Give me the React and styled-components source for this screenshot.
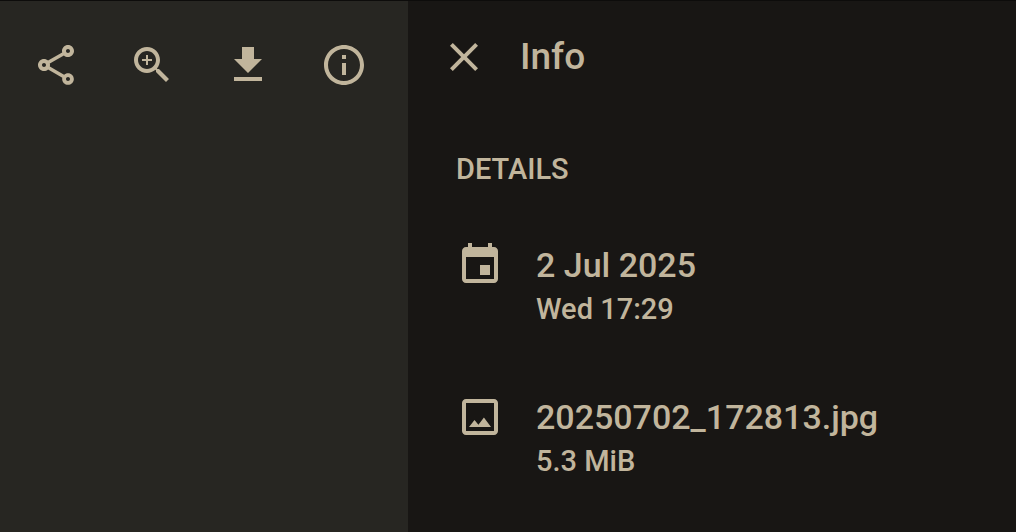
import React from "react";
import styled, { createGlobalStyle } from "styled-components";

const GlobalStyle = createGlobalStyle`
  *, *::before, *::after {
    box-sizing: border-box;
  }
  body {
    margin: 0;
    background: #181614;
    color: #c1b59c;
    font-family: Roboto, "Liberation Sans", sans-serif;
    font-weight: 500;
  }
`;

const Viewer = styled.div`
  display: flex;
  min-height: 100vh;
  border-top: 1px solid #0d0c0b;
`;

const Stage = styled.main`
  flex: 1;
  background: #272622;
`;

const Toolbar = styled.div`
  display: flex;
  justify-content: flex-end;
  padding: 16px 16px 0 8px;
`;

const IconButton = styled.button`
  display: flex;
  padding: ${(p) => (p.$compact ? "0" : "24px")};
  border: 0;
  background: none;
  color: inherit;
  cursor: pointer;
`;

const Glyph = styled.svg`
  display: block;
  flex: none;
  width: 48px;
  height: 48px;
  fill: currentColor;
`;

const Panel = styled.aside`
  flex: 0 0 608px;
  padding: 32px 32px 0;
  background: #181614;
`;

const PanelHeader = styled.header`
  display: flex;
  align-items: center;
  gap: 32px;
`;

const Title = styled.h1`
  margin: 0;
  font-size: 37px;
  line-height: 48px;
  font-weight: inherit;
`;

const SectionTitle = styled.h2`
  margin: 68px 0 0 16px;
  font-size: 29px;
  line-height: 40px;
  font-weight: inherit;
`;

const DetailList = styled.ul`
  display: grid;
  gap: 64px;
  margin: 52px 0 0 16px;
  padding: 0;
  list-style: none;
`;

const Detail = styled.li`
  display: flex;
  gap: 32px;
`;

const Primary = styled.div`
  font-size: 34px;
  line-height: 48px;
`;

const Secondary = styled.div`
  font-size: 29px;
  line-height: 40px;
`;

const icons = {
  share:
    "M18 16.08c-.76 0-1.44.3-1.96.77L8.91 12.7c.05-.23.09-.46.09-.7s-.04-.47-.09-.7l7.05-4.11c.54.5 1.25.81 2.04.81 1.66 0 3-1.34 3-3s-1.34-3-3-3-3 1.34-3 3c0 .24.04.47.09.7L8.04 9.81C7.5 9.31 6.79 9 6 9c-1.66 0-3 1.34-3 3s1.34 3 3 3c.79 0 1.5-.31 2.04-.81l7.12 4.16c-.05.21-.08.43-.08.65 0 1.61 1.31 2.92 2.92 2.92s2.92-1.31 2.92-2.92-1.31-2.92-2.92-2.92zM18 4c.55 0 1 .45 1 1s-.45 1-1 1-1-.45-1-1 .45-1 1-1zM6 13c-.55 0-1-.45-1-1s.45-1 1-1 1 .45 1 1-.45 1-1 1zm12 7.02c-.55 0-1-.45-1-1s.45-1 1-1 1 .45 1 1-.45 1-1 1z",
  zoom:
    "M15.5 14h-.79l-.28-.27C15.41 12.59 16 11.11 16 9.5 16 5.91 13.09 3 9.5 3S3 5.91 3 9.5 5.91 16 9.5 16c1.61 0 3.09-.59 4.23-1.57l.27.28v.79l5 4.99L20.49 19l-4.99-5zm-6 0C7.01 14 5 11.99 5 9.5S7.01 5 9.5 5 14 7.01 14 9.5 11.99 14 9.5 14zm2.5-4h-2v2H9v-2H7V9h2V7h1v2h2v1z",
  download: "M19 9h-4V3H9v6H5l7 7 7-7zM5 18v2h14v-2H5z",
  info:
    "M11 7h2v2h-2zm0 4h2v6h-2zm1-9C6.48 2 2 6.48 2 12s4.48 10 10 10 10-4.48 10-10S17.52 2 12 2zm0 18c-4.41 0-8-3.59-8-8s3.59-8 8-8 8 3.59 8 8-3.59 8-8 8z",
  close:
    "M19 6.41L17.59 5 12 10.59 6.41 5 5 6.41 10.59 12 5 17.59 6.41 19 12 13.41 17.59 19 19 17.59 13.41 12z",
  calendar:
    "M17 12h-5v5h5v-5zM16 1v2H8V1H6v2H5c-1.11 0-1.99.9-1.99 2L3 19c0 1.1.89 2 2 2h14c1.1 0 2-.9 2-2V5c0-1.1-.9-2-2-2h-1V1h-2zm3 18H5V8h14v11z",
  image:
    "M19 5v14H5V5h14m0-2H5c-1.1 0-2 .9-2 2v14c0 1.1.9 2 2 2h14c1.1 0 2-.9 2-2V5c0-1.1-.9-2-2-2zm-5.04 9.29l-2.75 3.54-1.96-2.36L6.5 17h11l-3.54-4.71z",
};

function Icon({ name }) {
  return (
    <Glyph viewBox="0 0 24 24" aria-hidden="true">
      <path d={icons[name]} />
    </Glyph>
  );
}

const actions = [
  { icon: "share", label: "Share" },
  { icon: "zoom", label: "Zoom" },
  { icon: "download", label: "Download" },
  { icon: "info", label: "Info" },
];

const details = [
  { icon: "calendar", primary: "2 Jul 2025", secondary: "Wed 17:29" },
  { icon: "image", primary: "20250702_172813.jpg", secondary: "5.3 MiB" },
];

export default function App() {
  return (
    <>
      <GlobalStyle />
      <Viewer>
        <Stage>
          <Toolbar>
            {actions.map((a) => (
              <IconButton key={a.icon} type="button" aria-label={a.label}>
                <Icon name={a.icon} />
              </IconButton>
            ))}
          </Toolbar>
        </Stage>
        <Panel>
          <PanelHeader>
            <IconButton $compact type="button" aria-label="Close">
              <Icon name="close" />
            </IconButton>
            <Title>Info</Title>
          </PanelHeader>
          <SectionTitle>DETAILS</SectionTitle>
          <DetailList>
            {details.map((d) => (
              <Detail key={d.icon}>
                <Icon name={d.icon} />
                <div>
                  <Primary>{d.primary}</Primary>
                  <Secondary>{d.secondary}</Secondary>
                </div>
              </Detail>
            ))}
          </DetailList>
        </Panel>
      </Viewer>
    </>
  );
}
